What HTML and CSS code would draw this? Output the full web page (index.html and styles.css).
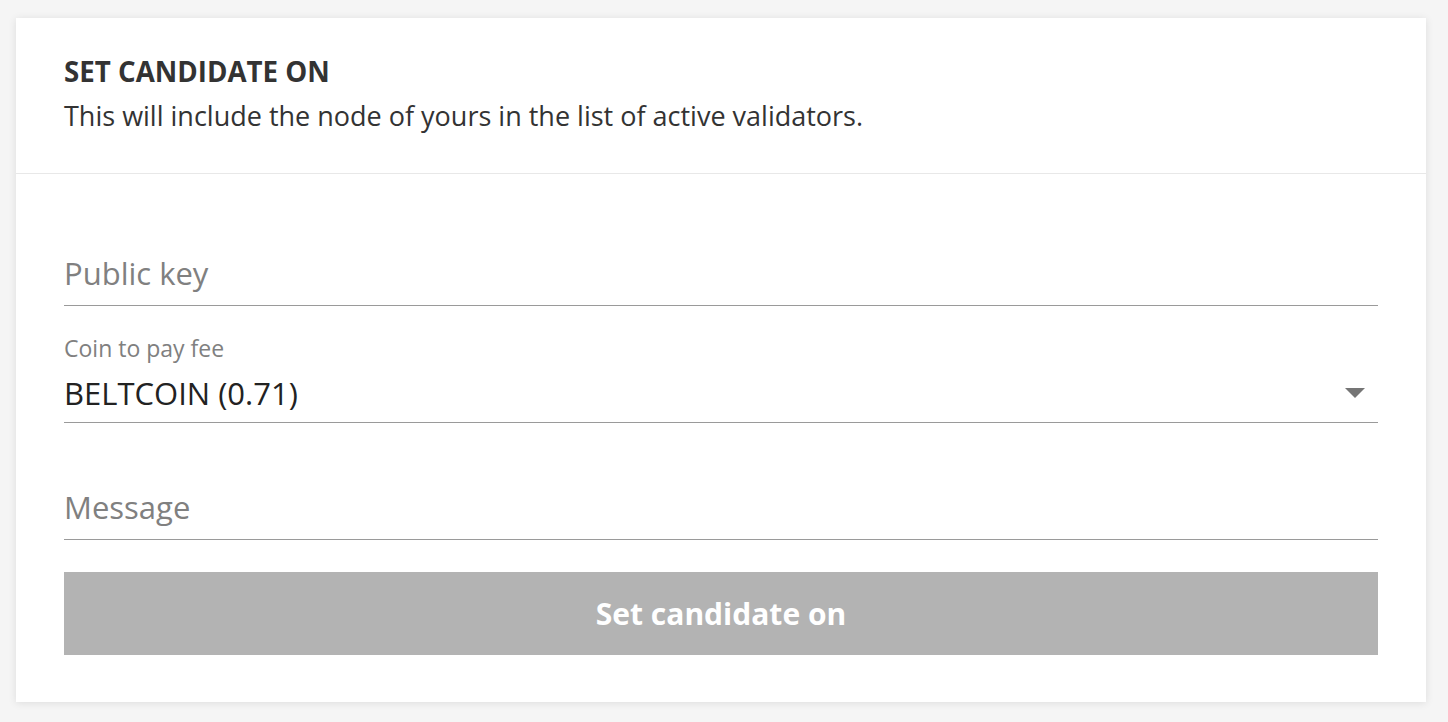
FILE: index.html
```html
<!DOCTYPE html>
<html lang="en">
<head>
<meta charset="utf-8">
<title>Set candidate on</title>
<link rel="stylesheet" href="styles.css">
</head>
<body>
<div class="card">
  <div class="card-header">
    <div class="title">SET CANDIDATE ON</div>
    <div class="subtitle">This will include the node of yours in the list of active validators.</div>
  </div>
  <form class="card-body">
    <div class="field field-plain">
      <div class="label"></div>
      <input class="input" type="text" placeholder="Public key">
    </div>
    <div class="field">
      <div class="label">Coin to pay fee</div>
      <div class="select">
        <span class="select-value">BELTCOIN (0.71)</span>
        <span class="arrow"></span>
      </div>
    </div>
    <div class="field field-plain">
      <div class="label"></div>
      <input class="input" type="text" placeholder="Message">
    </div>
    <button class="submit" type="button">Set candidate on</button>
  </form>
</div>
</body>
</html>
```
FILE: styles.css
```css
html, body {
  margin: 0;
  padding: 0;
}
body {
  background: #f5f5f5;
  font-family: "Open Sans", "Liberation Sans", sans-serif;
  color: #333333;
  padding: 18px 22px 20px 16px;
}
.card {
  background: #ffffff;
  box-shadow: 0 1px 8px rgba(0, 0, 0, 0.10);
}
.card-header {
  padding: 35px 48px 39px 48px;
  border-bottom: 1px solid #e8e8e8;
}
.title {
  font-size: 27.7px;
  line-height: 36px;
  font-weight: 700;
  color: #333333;
}
.subtitle {
  margin-top: 9px;
  font-size: 27px;
  line-height: 36px;
  color: #333333;
}
.card-body {
  display: flex;
  flex-direction: column;
  gap: 28px;
  padding: 43px 48px 47px 48px;
  margin: 0;
}
.field {
  display: flex;
  flex-direction: column;
  border-bottom: 1px solid #9a9a9a;
  padding-bottom: 9px;
}
.field-plain {
  padding-bottom: 12px;
}
.label {
  height: 28px;
  font-size: 23px;
  line-height: 28px;
  color: #808080;
  margin-bottom: 11px;
}
.field-plain .label {
  margin-bottom: 8px;
}
.input {
  display: block;
  width: 100%;
  height: 40px;
  padding: 0;
  margin: 0;
  border: none;
  outline: none;
  background: transparent;
  font-family: inherit;
  font-size: 31px;
  line-height: 40px;
  color: #222222;
}
.input::placeholder {
  color: #808080;
  opacity: 1;
}
.select {
  display: flex;
  align-items: center;
  justify-content: space-between;
  height: 40px;
}
.select-value {
  font-size: 31px;
  line-height: 40px;
  color: #222222;
}
.arrow {
  width: 0;
  height: 0;
  margin-right: 13px;
  border-left: 10px solid transparent;
  border-right: 10px solid transparent;
  border-top: 10px solid #757575;
}
.submit {
  margin-top: 4px;
  height: 83px;
  border: none;
  background: #b3b3b3;
  color: #ffffff;
  font-family: inherit;
  font-size: 30px;
  font-weight: 700;
  cursor: default;
}
```
